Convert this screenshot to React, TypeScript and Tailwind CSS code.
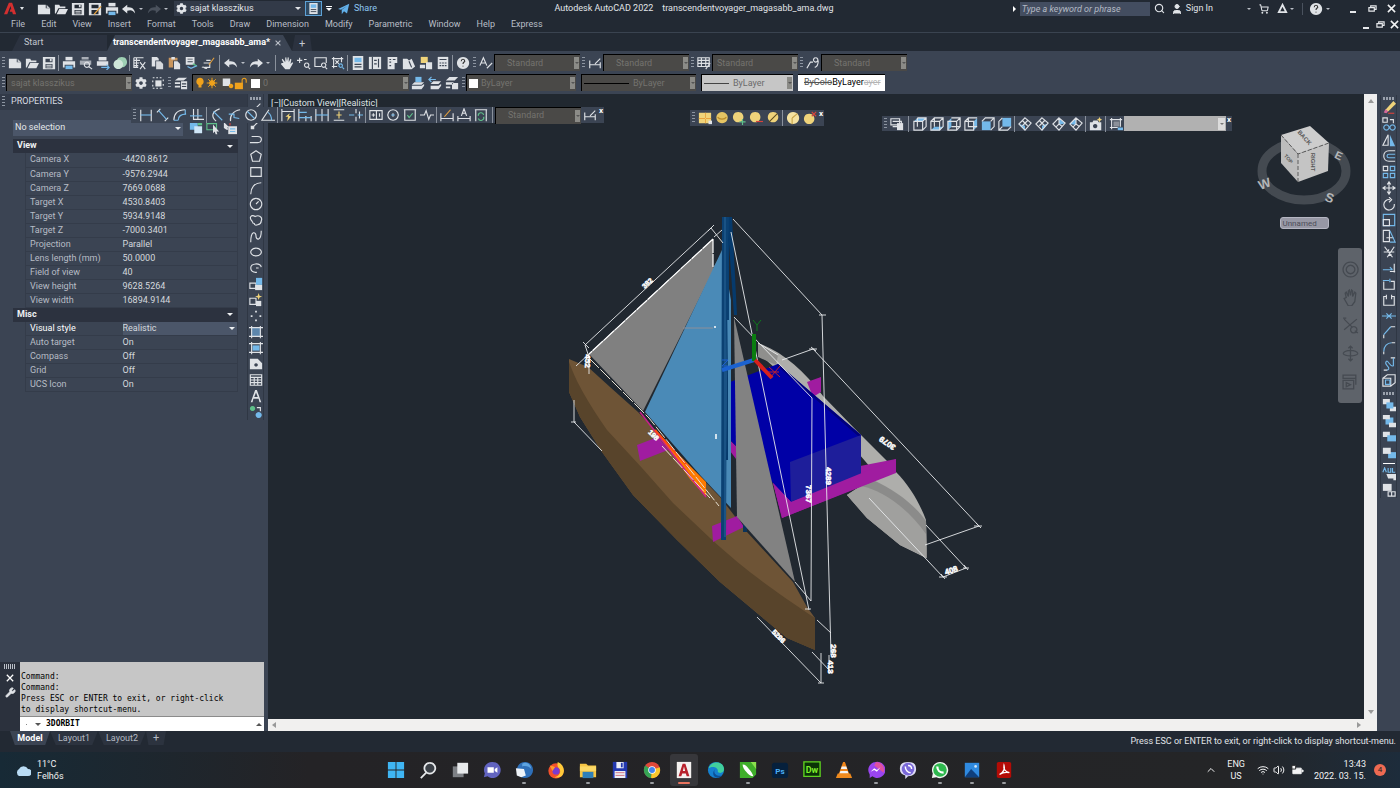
import React from "react";
import {
  Search, User, ShoppingCart, Wrench, Wifi, Volume2, ChevronUp,
} from "lucide-react";
import { FaCog } from "react-icons/fa";

type Part = ["s" | "f", string, string];
const W = "#dfe2e6";
const B = "#74b9ea";
const O = "#e8a23c";
const Y = "#efd37a";
const G = "#5fc08a";
const R = "#d8433c";
const D = "#3b4453";

const ICONS: Record<string, Part[]> = {
  newFile: [["f", W, "M1 3h9v4h5v7H1z"], ["f", "#c4c8ce", "M11 3l4 4h-4z"]],
  open: [["f", W, "M1 3h5l1 2h6v2H5l-3 6H1z"], ["f", W, "M6 8h10l-3 6H3z"]],
  save: [["f", W, "M1 1h14v14H1zM4 3v4h8V3zM4 9v5h8V9z"], ["f", W, "M5 10h6v1H5zM5 12h6v1H5zM9 3h2v3H9z"]],
  saveAs: [["f", W, "M1 1h14v14H1zM4 3v4h8V3zM4 9v5h8V9z"], ["s", O, "M7 14l8-9"]],
  print: [["f", W, "M4 1h8v4H4z"], ["f", W, "M1 6h14v7h-2v-3H3v3H1z"], ["f", B, "M4 11h8v4H4z"]],
  preview: [["f", "#a8adb5", "M3 1h8v3H3zM1 5h13v5H1z"], ["s", W, "M9 7a3 3 0 1 0 .1 0M11 12l4 3"]],
  publish: [["f", W, "M3 1h9v4H3zM1 6h13v5H1z"], ["s", B, "M6 13h9M12 10l3 3-3 3"]],
  globe: [["f", "#9ed0b4", "M10 1a6 6 0 1 0 .1 0z"], ["f", "#cfe6d8", "M6 4a5.500 5.500 0 1 0 .1 0z"]],
  cut: [["s", W, "M1 2h11M1 5h7M1 8h6M1 11h5M1 2v11h5M4 2v11M8 7l6 8M14 7l-6 8"]],
  copy: [["f", W, "M2 1h6l2 2v2H6v7H2z"], ["f", "#d5d8dc", "M7 6h5l3 3v6H7z"]],
  paste: [["f", "#c9955c", "M2 2h10v3H7v8H2z"], ["f", W, "M8 6h4l3 3v6H8zM5 1h4v3H5z"]],
  match: [["f", W, "M2 1h10v9H2zM4 3v1h6V3zM4 6v1h6V6z"], ["s", B, "M4 12l4 2 7-3"], ["s", G, "M10 9l4 2"]],
  brush: [["s", W, "M1 13c3-2 2 2 6 1M3 8h7v5H4M6 5h5"], ["s", O, "M9 10l6-8"]],
  undo: [["f", W, "M0 8l6-5v3c5 0 8 1 9 7-3-4-5-4-9-3v3z"]],
  redo: [["f", W, "M16 8l-6-5v3C5 6 2 7 1 13c3-4 5-4 9-3v3z"]],
  redoDim: [["f", "#4a515c", "M16 8l-6-5v3C5 6 2 7 1 13c3-4 5-4 9-3v3z"]],
  pan: [["f", W, "M4 8L2 4l1-1 3 4V2l1-1 1 5 1-5 1 1v5l2-4 1 1-1 5 2-2 1 1-4 7H6L1 9l1-1z"]],
  zoomRt: [["s", W, "M0 5h6M3 2v6M8 4h3M11 8a2.500 2.500 0 1 0 .1 0M13 13l2 2"]],
  zoomWin: [["s", W, "M8 12H1V2h13v6M11 8a2.500 2.500 0 1 0 .1 0M13 13l2 2"]],
  zoomPrev: [["s", W, "M1 3h13M3 1v13M12 1v6M1 12h6M5 5l4 4M9 5L5 9"], ["s", B, "M11 9a2 2 0 1 0 .1 0M13 13l2 2"]],
  props: [["f", W, "M2 0h12v16H2z"], ["f", B, "M4 2h8v5H4z"], ["s", D, "M4 9.500h8M4 12.500h8"]],
  design: [["f", W, "M1 1h14v14H1z"], ["s", D, "M5 1v14M7 5h3M7 9h3M12 3v10"]],
  palettes: [["f", W, "M3 1h11v7h-3v7H3z"], ["s", D, "M5 4h2M9 4h3M5 7h2M5 11h2"]],
  sheet: [["f", W, "M1 3h5l2 2 3-2 4 9-4 3H1z"], ["s", D, "M8 6l3 7"]],
  markup: [["f", Y, "M2 1h8v7H2z"], ["f", W, "M8 7h7v8H8zM1 10h6v4H1z"]],
  calc: [["f", W, "M2 1h12v14H2z"], ["s", D, "M4 4h8M4 8h2M7 8h2M10 8h2M4 11h2M7 11h2M10 11h2"]],
  help: [["f", W, "M8 1a7 7 0 1 0 .1 0z"], ["s", "#333", "M6 6c0-3 4-3 4 0 0 1-2 1-2 3M8 11v1"]],
  textStyle: [["s", W, "M1 11L5 2l4 9M2.500 8h5"], ["s", W, "M9 14l6-6"]],
  dimStyle: [["s", W, "M2 5v9M14 7v7M2 10h12M8 9l6-6"]],
  tableStyle: [["s", W, "M1 2h13v10H1zM1 5h13M1 8.500h13M5 2v10M10 2v10"], ["s", W, "M10 15l5-7"]],
  leader: [["s", W, "M1 14l4-7h3M11 2a2.500 2.500 0 1 0 .1 0M14 5c0 5-1 7-4 8"]],
  workspace: [["s", W, "M2 2h2M6 2h2M10 2h2M14 4v2M14 9v2M2 14h2M6 14h2M10 14h3M2 5v2M2 10v2"], ["f", W, "M5 5h7v7H5z"]],
  layers: [["f", W, "M5 2h10l-4 3H1zM1 7h6v2H1zM1 11h6v2H1zM8 6h7v9H8z"], ["s", D, "M9 9h5M9 12h5"]],
  layerA: [["f", B, "M5 1h7v6H5z"], ["f", W, "M4 7h11l-3 3H1zM1 11h11l3-2v2l-3 4H1z"]],
  layerB: [["s", B, "M9 4H2M4 1L1 4l3 3"], ["f", W, "M6 6h9l-3 3H3zM3 11h9l3-2v2l-3 4H3z"]],
  layerC: [["f", W, "M5 1h10l-4 4H1zM1 7h9l-2 3H1zM8 8h7v7H8zM1 12h5v2H1z"]],
  bulb: [["f", "#f0a21c", "M8 1a5 5 0 0 0-2 9.500V14h4v-3.500A5 5 0 0 0 8 1z"]],
  sun: [["f", "#f0a21c", "M8 4a4 4 0 1 0 .1 0z"], ["s", "#f0a21c", "M8 1v14M1 8h14M3 3l10 10M13 3L3 13"]],
  vpFreeze: [["f", W, "M1 2h10v10H1z"], ["f", "#f0a21c", "M12 9a3 3 0 1 0 .1 0z"]],
  lock: [["f", "#f0a21c", "M1 7h10v8H1z"], ["s", "#f0a21c", "M10 8V4a2 2 0 0 1 5 0v3"]],
  dLinear: [["s", W, "M2 2v13M14 2v13"], ["s", B, "M2 8h12"]],
  dAligned: [["s", W, "M1 5l4-4M10 15l4-4"], ["s", B, "M3 3l9 10"]],
  dArc: [["s", W, "M1 14C1 7 5 2 14 2"], ["s", B, "M6 14c0-5 3-7 9-7M1 14h5M14 2v5"]],
  dOrd: [["s", W, "M4 1v12h12M9 1v12"], ["s", B, "M0 9h14"]],
  dRadius: [["s", W, "M7 15C1 10 2 4 11 1"], ["s", B, "M4 4l10 10"]],
  dJog: [["s", W, "M4 15C3 9 7 3 15 2"], ["s", B, "M2 7l6 0 0 4 6 1"]],
  dDia: [["s", W, "M8 2a6 6 0 1 0 .1 0"], ["s", B, "M4 4l8 8"]],
  dAng: [["s", W, "M9 2L1 14h15"], ["s", B, "M8 5c3 2 4 4 4 9"]],
  dQuick: [["s", W, "M1 1v14M15 1v14M1 4h14"], ["f", Y, "M10 6L5 10h3l-1 5 5-6H9z"]],
  dBase: [["s", W, "M1 1v14M9 9v6M15 9v6"], ["s", B, "M1 5h9M1 11h14"]],
  dCont: [["s", W, "M1 1v14M8 1v14M15 1v14"], ["s", B, "M1 8h14"]],
  dSpace: [["s", W, "M2 2h12M2 14h12"], ["s", Y, "M8 4v8M5 8h6"]],
  dBreak: [["s", W, "M8 1v5M8 10v5M12 4v8"], ["s", B, "M0 8h6M10 8h6"]],
  dTol: [["s", W, "M1 3h14v10H1zM8.500 3v10M3 8h4M5 6v4M12 6v4"]],
  dCenter: [["s", W, "M8 2a6 6 0 1 0 .1 0M8 6v4"], ["s", B, "M6 8h4"]],
  dInspect: [["s", W, "M1 2h14M2 2v12h12V2"], ["s", G, "M5 8l2 3 4-5"]],
  dJogLine: [["s", W, "M0 8h5l2-5 3 10 2-5h4"]],
  dEdit: [["s", W, "M1 6v9M15 6v9M1 12h14"], ["s", O, "M5 10l7-8"]],
  dTextEdit: [["s", W, "M1 9v6M15 9v6M1 12h14M5 9l3-8 3 8M6 6h4"]],
  dUpdate: [["s", W, "M1 2h14M2 2v13M14 2v13"], ["s", G, "M5 9a3 3 0 0 1 6-1M11 10a3 3 0 0 1-6 2"]],
  group1: [["f", Y, "M1 2h14v12H1z"], ["f", O, "M1 8h14v1H1zM8 2h1v12H8z"], ["f", W, "M12 11h4v4h-4z"]],
  group2: [["f", "#e5c463", "M8 1a6.500 6.500 0 1 0 .1 0z"], ["s", "#b98b2b", "M3 7c2 3 8 3 10 0"]],
  group3: [["f", Y, "M7 1a6 6 0 1 0 .1 0z"], ["s", G, "M12 9v7M8.500 12.500h7"]],
  group4: [["f", Y, "M7 1a6 6 0 1 0 .1 0z"], ["s", R, "M8 12h8"]],
  group5: [["f", Y, "M8 1a6 6 0 1 0 .1 0z"], ["s", "#5c4a1e", "M3 13L13 3"]],
  group6: [["f", "#f5e2a0", "M8 1a7 7 0 1 0 .1 0z"], ["s", "#c9a548", "M7 8v7M7 8l6-5"]],
  group7: [["f", Y, "M7 3a6 6 0 1 0 .1 0z"], ["s", R, "M10 1l5 5M15 1l-5 5"]],
  named: [["s", W, "M1 2h10v7H1zM3 5h10v6H3"], ["f", W, "M8 7h7v8H8z"]],
  vTop: [["f", B, "M5 1h10l-4 4H1z"], ["s", W, "M1 5h10v10H1zM5 1h10v10l-4 4M11 5l4-4M5 1v10"]],
  vBottom: [["f", B, "M5 11h10l-4 4H1z"], ["s", W, "M1 5h10v10H1zM1 5l4-4h10v10l-4 4M5 1v10M11 5l4-4"]],
  vLeft: [["f", B, "M1 5l4-4v10l-4 4z"], ["s", W, "M1 5h10v10H1zM5 1h10v10l-4 4M5 11h10M11 5l4-4"]],
  vRight: [["f", B, "M11 5l4-4v10l-4 4z"], ["s", W, "M1 5h10v10H1zM1 5l4-4h10M5 1v10h10"]],
  vFront: [["f", B, "M1 5h10v10H1z"], ["s", W, "M1 5l4-4h10v10l-4 4M11 5l4-4"]],
  vBack: [["f", B, "M5 1h10v10H5z"], ["s", W, "M5 1L1 5v10h10l4-4M1 15l4-4"]],
  isoSW: [["f", B, "M1 8l7 2v5z"], ["s", W, "M8 1l7 6-7 8-7-7zM5 4l6 6M11 4L5 10"]],
  isoSE: [["f", B, "M15 7l-7 3v5z"], ["s", W, "M8 1l7 6-7 8-7-7zM5 4l6 6M11 4L5 10"]],
  isoNE: [["f", B, "M8 1l7 6-7 2z"], ["s", W, "M8 1l7 6-7 8-7-7zM5 11l3-3 4 3M8 1v8"]],
  isoNW: [["f", B, "M8 1L1 8l7 1z"], ["s", W, "M8 1l7 6-7 8-7-7zM5 11l3-3 4 3M8 1v8"]],
  camera: [["f", W, "M1 6h3l1-2h5l1 2h3v9H1z"], ["f", D, "M7 8a2.500 2.500 0 1 0 .1 0z"], ["f", Y, "M12 0l1 2 2 1-2 1-1 2-1-2-2-1 2-1z"]],
  viewMgr: [["s", W, "M1 3h14M3 1v13M13 1v10M1 12h9"], ["f", "#8b9099", "M5 5h7v6H5z"], ["f", B, "M10 12h6v3h-6z"]],
  line: [["s", W, "M3 13L13 3"]],
  ray: [["s", W, "M5 11l7-7"], ["f", W, "M2 10h4v4H2z"]],
  pline: [["s", W, "M3 4h7c6 0 5 7 0 7H1"]],
  polygon: [["s", W, "M8 2l6 4-2 8H4L2 6z"]],
  rect: [["s", W, "M2 3h12v10H2z"]],
  arc: [["s", W, "M2 15C2 8 6 2 14 2"]],
  circle: [["s", W, "M8 1.500a6.500 6.500 0 1 0 .1 0M8 8l3-3"]],
  cloud: [["s", W, "M4 10C-1 5 3 1 7 4c4-2 9 0 7 5 0 4-8 7-8 3-1 0-2-1-2-2"]],
  spline: [["s", W, "M2 15C2 1 8 3 8 8s6 6 6-6"]],
  ellipse: [["s", W, "M8 3.500a6 4.500 0 1 0 .1 0"]],
  ellArc: [["s", W, "M14 7c-1-5-12-5-12 1 0 4 4 5 7 5M8 8h3"]],
  insert: [["s", W, "M1 7h7v6H1z"], ["f", B, "M8 1h7v8H8z"], ["f", W, "M7 9h8v6H7z"]],
  block: [["s", W, "M1 6h7v7H1z"], ["f", Y, "M11 0l1 3 3 1-3 1-1 3-1-3-3-1 3-1z"], ["f", W, "M8 9h6v6H8z"]],
  point: [["f", W, "M7 2h2v2H7zM7 12h2v2H7zM2 7h2v2H2zM12 7h2v2h-2z"]],
  hatch: [["f", "#5d86ac", "M3 3h10v10H3z"], ["s", W, "M0 3h16M0 13h16M3 1v14M13 1v14"]],
  gradient: [["f", B, "M4 5h8v6H4z"], ["s", W, "M0 3h16M0 13h16M3 1v14M13 1v14"]],
  region: [["f", W, "M1 2h9l5 5v7H1zM8 7a2 2 0 1 0 .1 0z"]],
  table: [["s", W, "M1.500 2h13v12h-13zM1 5h14M1 8h14M1 11h14M6 5v9M10 5v9"]],
  mtext: [["f", W, "M2 15L7 1h2l5 14h-2l-1-4H5l-1 4zM6 9h4L8 4z"]],
  addSel: [["f", G, "M4 1a3 3 0 1 0 .1 0z"], ["f", B, "M11 8a3.500 3.500 0 1 0 .1 0z"], ["s", W, "M9 3h4v4"]],
  erase: [["f", Y, "M13 0l3 3-9 9-3-2z"], ["f", "#d3689a", "M4 9l3 3-2 2-3-1z"], ["s", R, "M7 14h7"]],
  copyObj: [["s", W, "M1 1h5v5H1zM9 3h4v4"], ["s", B, "M5 9a3 3 0 1 0 .1 0M12 9a3 3 0 1 0 .1 0"]],
  mirror: [["s", W, "M7 2L1 14h6z"], ["f", B, "M9 2l6 13H9z"]],
  offset: [["s", W, "M15 2H8c-8 0-8 12 0 12h7"], ["s", B, "M15 6H8c-3 0-3 4 0 4h7"]],
  array: [["s", W, "M1.500 1.500h5v5h-5z"], ["s", B, "M9.500 1.500h5v5h-5zM1.500 9.500h5v5h-5zM9.500 9.500h5v5h-5z"]],
  move: [["s", W, "M8 1v14M1 8h14M6 4l2-3 2 3M6 12l2 3 2-3M4 6L1 8l3 2M12 6l3 2-3 2"]],
  rotate: [["s", W, "M9 3a6 6 0 1 0 5 5M8 0l3 3-3 3"]],
  scale: [["s", B, "M1.500 1.500h13v13h-13z"], ["s", W, "M1.500 7.500h7v7h-7z"]],
  stretch: [["s", W, "M1.500 1.500h7v13h-7zM5 10h8"], ["s", B, "M9 2l6 13H9"]],
  trim: [["s", W, "M3 2l9 12M14 2L6 14M2 8h12M8 5l-2 3M8 12l3-1"]],
  extend: [["s", W, "M14 3v10M9 12h6"], ["s", B, "M1 10h11M9 7l3 3"]],
  breakPt: [["s", W, "M2 5v9h12V5h-4"], ["s", B, "M1 4h7M9 2v4"]],
  breakObj: [["s", W, "M5 4H2v10h12V4h-3M5 2v5M11 2v5"]],
  join: [["s", B, "M0 8h16M5 5l3 3-3 3M11 5L8 8l3 3"]],
  chamfer: [["s", W, "M2 15v-4M10 2h5"], ["s", B, "M2 11l8-9"]],
  fillet: [["s", W, "M2 15v-3M11 2h4"], ["s", B, "M2 12c0-6 4-10 9-10"]],
  blend: [["s", W, "M2 15h4M10 1h5"], ["s", B, "M6 15c6-3-5-6-1-10 2-2 4 7 8 5V1"]],
  explode: [["s", W, "M1 6h9v9H1zM1 6l5-4h9v9l-5 4"], ["s", B, "M4 8h5v5H4z"]],
  front: [["f", W, "M1 1h8v6H1zM9 10h7v5H9z"], ["f", B, "M5 5h8v7H5z"]],
  back: [["f", B, "M4 4h9v8H4z"], ["f", W, "M1 1h8v5H1zM8 10h8v5H8z"]],
  above: [["f", W, "M1 2h8v6H1z"], ["f", B, "M6 6h10v7H6z"]],
  under: [["f", B, "M7 7h9v7H7z"], ["f", W, "M1 2h9v7H1z"]],
  textFront: [["s", B, "M1 6l2-5 2 5M7 1v5h3V1M12 1v5h3"], ["f", W, "M5 8h11v7h-3v-2H7z"]],
  hatchBack: [["f", W, "M1 1h10v8H1z"], ["s", W, "M7 10h8v5H7zM11 10v5"]],
  pickAdd: [["f", B, "M1 2h9v8H1z"], ["f", "#cfe6f7", "M6 6h9v8H6z"], ["f", G, "M10 1h5v4h-5z"]],
  selectObj: [["s", G, "M1 3h11v7H1z"], ["f", W, "M8 4l7 8-3 0 1 3-2 0-1-3-2 2z"]],
  quickSel: [["f", W, "M1 1l6 6-2 0 1 3-2 0-3-2z"], ["f", W, "M6 6h10v9H6z"], ["s", R, "M8 1v4"], ["s", B, "M8 9h6M8 12h6"]],
};

function Icon({ n, size = 14 }: { n: string; size?: number }) {
  return (
    <svg viewBox="0 0 16 16" width={size} height={size} aria-hidden="true" className="shrink-0">
      {ICONS[n].map(([k, c, d], i) =>
        k === "f" ? (
          <path key={i} d={d} fill={c} fillRule="evenodd" />
        ) : (
          <path key={i} d={d} fill="none" stroke={c} strokeWidth="1.3" />
        ),
      )}
    </svg>
  );
}

function Tool({ n }: { n: string }) {
  return (
    <button aria-label={n} className="flex h-4 w-[17px] shrink-0 items-center justify-center">
      <Icon n={n} />
    </button>
  );
}

function Drop() {
  return (
    <button aria-label="More" className="flex h-4 w-2 shrink-0 items-center justify-center">
      <span className="size-0 border-x-2 border-t-2 border-x-transparent border-t-[#b9bec6]" />
    </button>
  );
}

function Tools({ list }: { list: string }) {
  return (
    <>
      {list.split(" ").map((n, i) => {
        if (n === "|") return <span key={i} className="mx-px h-4 w-px shrink-0 bg-[#8a919c]" />;
        if (n === "||") return <span key={i} className="mx-[2px] h-4 w-[2px] shrink-0 border-r border-[#8a919c]" />;
        if (n === "v") return <Drop key={i} />;
        return <Tool key={i} n={n} />;
      })}
    </>
  );
}

function Grip() {
  return (
    <span className="flex h-4 w-[6px] shrink-0 items-center justify-center">
      <span className="h-3 w-[3px] bg-[repeating-linear-gradient(to_bottom,#8d95a1_0_1px,transparent_1px_3px)]" />
    </span>
  );
}

function GripRow() {
  return (
    <span className="mt-[2px] h-[3px] w-3 bg-[repeating-linear-gradient(to_right,#9aa1ac_0_2px,transparent_2px_3px)]" />
  );
}

function Combo({
  label, value, box, text = "text-[#74736f]", children,
}: {
  label: string; value: string; box: string; text?: string; children?: React.ReactNode;
}) {
  return (
    <div className={`flex h-[17px] shrink-0 items-center border-t border-l border-black ${box}`}>
      {children}
      <select aria-label={label} className={`h-full min-w-0 flex-1 appearance-none bg-transparent text-[9px] leading-none outline-none ${text}`}>
        <option>{value}</option>
      </select>
      <span className="mx-px flex h-3 w-[5px] items-center justify-center bg-[#8b8b87]">
        <span className="size-0 border-x-2 border-t-2 border-x-transparent border-t-[#555]" />
      </span>
    </div>
  );
}

function WindowButtons({ small = false }: { small?: boolean }) {
  return (
    <div className={small ? "flex items-center gap-[5px]" : "flex items-center gap-[10px]"}>
      <button aria-label="Minimize" className="flex h-2 w-2 items-end">
        <span className="h-[2px] w-[6px] bg-[#e6e8eb]" />
      </button>
      <button aria-label="Restore">
        <svg viewBox="0 0 10 10" width="9" height="9"><path d="M1 4h6v4H1zM3 4V2h6v4H7" fill="none" stroke="#e6e8eb" strokeWidth="1.3" /></svg>
      </button>
      <button aria-label="Close">
        <svg viewBox="0 0 10 10" width="9" height="9"><path d="M1 1l8 8M9 1L1 9" stroke="#f2f3f4" strokeWidth="1.700" /></svg>
      </button>
    </div>
  );
}

function TitleBar() {
  return (
    <header className="flex h-[17px] items-center text-[9px] text-[#e1e4e8]">
      <div className="flex flex-1 items-center">
        <button aria-label="Application menu" className="flex w-[30px] items-center gap-[3px] pl-1">
          <svg viewBox="0 0 16 16" width="13" height="13"><path d="M0 15L6 1h4l5 14h-4l-1-3H7l1-3h1L8 5 4 15z" fill="#d32f2f" /></svg>
          <span className="size-0 border-x-2 border-t-[3px] border-x-transparent border-t-[#e1e4e8]" />
        </button>
        <div className="flex pr-1 pl-[5px]">
          <Tools list="newFile open save saveAs print undo v redoDim v" />
        </div>
        <div className="flex h-[15px] w-[131px] items-center bg-[#323a48] pl-[2px]">
          <FaCog size={11} color="#e1e4e8" />
          <select aria-label="Workspace" className="min-w-0 flex-1 appearance-none bg-transparent pl-[3px] outline-none">
            <option>sajat klasszikus</option>
          </select>
          <span className="mr-1 size-0 border-x-[3px] border-t-[3px] border-x-transparent border-t-[#e1e4e8]" />
        </div>
        <button aria-label="Save to web and mobile" className="flex h-[15px] w-[17px] items-center justify-center border border-[#5ea2d6] bg-[#2f4a63]">
          <Icon n="props" size={11} />
        </button>
        <button aria-label="Customize" className="ml-1 flex w-[6px] flex-col items-center gap-px">
          <span className="h-px w-full bg-white" />
          <span className="size-0 border-x-[3px] border-t-[3px] border-x-transparent border-t-white" />
        </button>
        <button className="ml-[6px] flex items-center gap-1 text-[#8ec8f2]">
          <svg viewBox="0 0 16 16" width="12" height="12"><path d="M0 8L15 1l-3 13-4-3-3 4V9l7-5-8 5z" fill="#62b0ea" /></svg>
          Share
        </button>
      </div>
      <h1 className="pr-2 whitespace-pre">Autodesk AutoCAD 2022    transcendentvoyager_magasabb_ama.dwg</h1>
      <div className="flex flex-1 items-center justify-end pr-1">
        <span className="mr-1 size-0 border-y-[3px] border-l-[3px] border-y-transparent border-l-white" />
        <input aria-label="Search" placeholder="Type a keyword or phrase" className="h-[14px] w-[130px] bg-[#434d60] pl-[2px] text-[9px] italic outline-none placeholder:text-[#b4bac4]" />
        <button aria-label="Find" className="ml-1"><Search size={11} strokeWidth={2.5} /></button>
        <button className="ml-[6px] flex items-center gap-[3px]"><User size={12} fill="#e1e4e8" />Sign In</button>
        <span className="w-8" />
        <Drop />
        <button aria-label="Store" className="ml-[6px]"><ShoppingCart size={10} strokeWidth={2.5} /></button>
        <button aria-label="Autodesk apps" className="ml-2">
          <svg viewBox="0 0 12 12" width="11" height="11"><path d="M6 2L2 10h8z" fill="none" stroke="#e1e4e8" strokeWidth="2" /></svg>
        </button>
        <Drop />
        <span className="mx-[6px] h-3 w-px bg-[#4a525e]" />
        <button aria-label="Help" className="mr-px"><Icon n="help" /></button>
        <Drop />
        <span className="w-[18px]" />
        <WindowButtons />
      </div>
    </header>
  );
}

const MENUS = ["File", "Edit", "View", "Insert", "Format", "Tools", "Draw", "Dimension", "Modify", "Parametric", "Window", "Help", "Express"];

function MenuBar() {
  return (
    <nav className="flex h-4 items-center border-b border-[#3a4350] pr-px pl-[11px] text-[9px] text-[#b9bec6]">
      <div className="flex flex-1 gap-4">
        {MENUS.map((m) => <button key={m}>{m}</button>)}
      </div>
      <WindowButtons small />
    </nav>
  );
}

function FileTabs() {
  return (
    <div className="flex h-[18px] items-end pl-3 text-[9px]">
      <button className="h-4 w-[95px] bg-[#2b323f] pl-3 text-left text-[#c3c8cf] [clip-path:polygon(8px_0,100%_0,100%_100%,0_100%)]">Start</button>
      <div className="flex h-4 w-[185px] items-center justify-between bg-[#3b4453] pr-[10px] pl-[6px] font-bold text-white [clip-path:polygon(8px_0,176px_0,100%_100%,0_100%)]">
        <button className="whitespace-nowrap">transcendentvoyager_magasabb_ama*</button>
        <button aria-label="Close tab">
          <svg viewBox="0 0 10 10" width="8" height="8"><path d="M2 2l6 6M8 2L2 8" stroke="#b9bec6" strokeWidth="1.4" /></svg>
        </button>
      </div>
      <button aria-label="New tab" className="h-4 w-5 bg-[#2b323f] text-[11px] leading-none text-[#c3c8cf] [clip-path:polygon(3px_0,90%_0,100%_100%,0_100%)]">+</button>
    </div>
  );
}

function Toolbars() {
  const dark = "bg-[#4a4947]";
  return (
    <div className="flex h-[43px] flex-col gap-[3px] bg-[#3b4453] py-[3px]">
      <div className="flex items-center">
        <Grip />
        <Tools list="newFile open save | print preview publish globe | cut copy paste match brush || undo v redo v || pan zoomRt zoomWin zoomPrev | props design palettes sheet markup calc | help" />
        <Grip />
        <Tool n="textStyle" />
        <Combo label="Text style" value="Standard" box={`w-[86px] pl-3 ${dark}`} />
        <Grip />
        <Tool n="dimStyle" />
        <Combo label="Dimension style" value="Standard" box={`w-[86px] pl-3 ${dark}`} />
        <Grip />
        <Tool n="tableStyle" />
        <Combo label="Table style" value="Standard" box={`w-[86px] pl-1 ${dark}`} />
        <Grip />
        <Tool n="leader" />
        <Combo label="Multileader style" value="Standard" box={`w-[86px] pl-3 ${dark}`} />
      </div>
      <div className="flex items-center">
        <Grip />
        <Combo label="Workspaces" value="sajat klasszikus" box={`w-[126px] pl-1 ${dark}`} />
        <button aria-label="Workspace settings" className="flex w-[17px] justify-center"><FaCog size={12} color={W} /></button>
        <Tools list="workspace" />
        <Grip />
        <Tools list="layers" />
        <div className="ml-[3px] flex">
          <Combo label="Layer" value="0" box={`w-[217px] pl-px ${dark}`}>
            <Icon n="bulb" size={12} />
            <Icon n="sun" size={12} />
            <span className="w-1" />
            <Icon n="vpFreeze" size={12} />
            <Icon n="lock" size={13} />
            <span className="mr-[3px] ml-1 size-[9px] bg-white" />
          </Combo>
        </div>
        <Tools list="layerA layerB layerC" />
        <Grip />
        <div className="flex gap-[5px]">
          <Combo label="Color" value="ByLayer" box={`w-[110px] pl-[2px] ${dark}`}>
            <span className="mr-[3px] size-[9px] bg-white" />
          </Combo>
          <Combo label="Linetype" value="ByLayer" box={`w-[115px] pl-[2px] ${dark}`}>
            <span className="mr-1 h-px w-[45px] bg-black" />
          </Combo>
          <Combo label="Lineweight" value="ByLayer" text="text-[#6b6b6b]" box="w-[92px] bg-[#c6c6c6] pl-[2px]">
            <span className="mr-1 h-px w-[25px] bg-[#444]" />
          </Combo>
          <div className="flex h-[17px] w-[87px] items-center border-t border-black bg-white pl-[6px] text-[9px] text-[#555]">
            <span className="line-through">ByColo</span>
            <span className="text-black">ByLayer</span>
            <span className="text-[#b5b5b5] line-through">ayer</span>
          </div>
        </div>
      </div>
    </div>
  );
}

const VIEW_ROWS = [
  ["Camera X", "-4420.8612"], ["Camera Y", "-9576.2944"], ["Camera Z", "7669.0688"],
  ["Target X", "4530.8403"], ["Target Y", "5934.9148"], ["Target Z", "-7000.3401"],
  ["Projection", "Parallel"], ["Lens length (mm)", "50.0000"], ["Field of view", "40"],
  ["View height", "9628.5264"], ["View width", "16894.9144"],
];
const MISC_ROWS = [["Visual style", "Realistic"], ["Auto target", "On"], ["Compass", "Off"], ["Grid", "Off"], ["UCS Icon", "On"]];

function Section({ title, rows }: { title: string; rows: string[][] }) {
  return (
    <section>
      <h3 className="flex h-[14px] items-center justify-between bg-[#2c323f] pr-[5px] pl-1 font-bold text-[#eef0f2]">
        {title}
        <span className="size-0 border-x-[3px] border-t-[3px] border-x-transparent border-t-[#eef0f2]" />
      </h3>
      <div className="pl-3">
        <table className="w-full table-fixed border-x border-[#343c4a]">
          <tbody>
            {rows.map(([k, v]) => (
              <tr key={k} className="h-[14px] border-b border-[#343c4a] leading-[13px]">
                <th scope="row" className={`w-[97px] p-0 pl-1 text-left font-normal ${v === "Realistic" ? "text-white" : "text-[#b7bcc5]"}`}>{k}</th>
                <td className="p-0 text-[#d4d8dd]">
                  {v === "Realistic" ? (
                    <div className="flex items-center bg-[#4b5669]">
                      <select aria-label={k} className="h-[13px] flex-1 appearance-none bg-transparent outline-none"><option>{v}</option></select>
                      <span className="mr-[2px] size-0 border-x-[3px] border-t-[3px] border-x-transparent border-t-[#eef0f2]" />
                    </div>
                  ) : v}
                </td>
              </tr>
            ))}
          </tbody>
        </table>
      </div>
    </section>
  );
}

function Properties() {
  return (
    <aside className="w-[247px] text-[9px]">
      <h2 className="flex h-4 items-center bg-[#323a48] text-[#d8dbe0]"><Grip /><span className="pl-[5px]">PROPERTIES</span></h2>
      <div className="mt-[10px] mr-[9px] ml-[13px]">
        <div className="mb-[3px] flex h-4 items-center">
          <div className="mr-1 flex h-4 w-[171px] items-center bg-[#4b5669] pl-[2px] text-[#e4e7ea]">
            <select aria-label="Selection" className="flex-1 appearance-none bg-transparent outline-none"><option>No selection</option></select>
            <span className="mr-[2px] size-0 border-x-[3px] border-t-[3px] border-x-transparent border-t-[#eef0f2]" />
          </div>
          <Tools list="pickAdd selectObj quickSel" />
        </div>
        <Section title="View" rows={VIEW_ROWS} />
        <Section title="Misc" rows={MISC_ROWS} />
      </div>
    </aside>
  );
}

function CommandWindow() {
  return (
    <section className="mr-1 flex h-[69px] bg-[#2b313d]">
      <div className="flex w-5 flex-col items-center gap-[5px] pt-[2px] text-[#e1e4e8]">
        <span className="h-[5px] w-3 bg-[repeating-linear-gradient(to_right,#b9bec6_0_1px,transparent_1px_2px)]" />
        <button aria-label="Close command line">
          <svg viewBox="0 0 10 10" width="8" height="8"><path d="M1 1l8 8M9 1L1 9" stroke="#fff" strokeWidth="1.600" /></svg>
        </button>
        <button aria-label="Customize command line"><Wrench size={11} fill="#e1e4e8" /></button>
      </div>
      <div className="flex flex-1 flex-col bg-[#c6c6c6] font-['DejaVu_Sans_Mono',monospace] text-black">
        <div className="flex-1 pt-[9px] pl-px text-[8px] leading-[11px]">
          <p>Command:</p><p>Command:</p>
          <p>Press ESC or ENTER to exit, or right-click</p>
          <p>to display shortcut-menu.</p>
        </div>
        <div className="flex h-[15px] items-center border-t border-[#8b8b8b] bg-white pr-[2px] pl-[6px]">
          <span className="mr-2 size-px bg-[#888]" />
          <span className="size-0 border-x-[3px] border-t-[3px] border-x-transparent border-t-[#555]" />
          <input aria-label="Command" defaultValue="3DORBIT" className="ml-[5px] min-w-0 flex-1 text-[8px] font-bold outline-none" />
          <span className="size-0 border-x-[3px] border-b-[3px] border-x-transparent border-b-[#555]" />
        </div>
      </div>
    </section>
  );
}

const DIMS = [
  "M711 228L585 345M713 239L589 354M708 231l6-6M583 342l6 6M711 228l12 15M722 230l-8 7M585 345l4 12M589 354v20M589 354l-13 12",
  "M574 400v22l28 29M571 422h5",
  "M731 232L809 610M733 219l89 96 9 340M819 315h7",
  "M734 317l78 81-1 203M758 343l20 12",
  "M782 360l31-11L979 526l-54 19M809 349h8M974 526h8M811 347l5 4M976 523l5 5",
  "M869 498l74 79 23-9-40-43M939 577h8M963 568h6M941 574l4 5M964 565l4 5",
  "M757 617l64 66v-30M818 683h6",
  "M817 620l14 13M795 582l16 19M812 652l19 20M805 609h6M829 655v18",
];

function Model() {
  return (
    <svg viewBox="268 94 1096 625" className="absolute inset-0 size-full" role="img" aria-label="Outrigger sailboat model">
      <path d="M758 343c25 9 45 27 65 53l34 35 33 33 6 8c14 14 24 32 30 48l1 38-27-13-33-27-20-23 30-20-60-70-59-52z" fill="#aeaeab" />
      <path d="M847 495l26-15c22 10 42 25 53 41l1 37-27-13-33-27z" fill="#8b8b8a" />
      <path d="M847 495l14-9c20 4 45 20 65 48v24l-26-13-33-27z" fill="#a0a09e" />
      <path d="M758 343l20 12-2 10-18-8z" fill="#8f8f8d" />
      <path d="M807 382l14-5v15l-8 5zM730 440l6 6v13l-6-8zM773 483l123-24v14L782 518z" fill="#a01ca0" />
      <path d="M730 382l48-18 83 71v40l-70 27-18-19-43-43z" fill="#0000a6" />
      <path d="M790 462l71-27v40l-70 27z" fill="#1e1e9a" />
      <path d="M778 364l83 71-3 1-82-71z" fill="#00007c" />
      <path d="M773 483l18 19 105-43v13L782 518z" fill="#a01ca0" />
      <path d="M569 359l19 8 22 20 28 25 82 85 27 35 46 50 14 25 8 11v32l-28-12-30-25-37-31-43-42-44-45-31-43-22-35-11-25z" fill="#6e5436" />
      <path d="M569 362c8 22 19 40 38 68l35 38 31 35 37 35c35 32 60 50 105 80v32l-28-12-30-25-37-31-43-42-44-45-31-43-22-35-11-25z" fill="#58442b" />
      <path d="M713 239L589 354l54 57 79-158-9 15z" fill="#808080" />
      <path d="M722 250l-77 162 55 63 31 33V300z" fill="#4a8ab7" />
      <path d="M637 445l21-8 10 13-28 11zM712 526l25-10 7 11-31 15z" fill="#a01ca0" />
      <path d="M657 433l49 49v15l-16-18z" fill="#ff7a00" />
      <path d="M640 412l66 85" stroke="#c81e8c" strokeWidth="1.500" />
      <path d="M655 430l34 38" stroke="#ff4a10" strokeWidth="2" />
      <path d="M722 217h7v103h-2l-1 220h-5z" fill="#0b4173" />
      <path d="M729 217h3l5 98h-3l-6-85v230h-2z" fill="#063a6c" />
      <path d="M725 217v320" stroke="#2a6698" strokeWidth="1" />
      <path d="M743 520h4v12h-4z" fill="#0b3359" />
      <path d="M734 317l3 200 58 65z" fill="#828282" />
      <path d="M683 328h30" stroke="#8b8f9a" />
      <path d="M716 434v5M714 327h2" stroke="#fff" strokeWidth="1.500" />
      <path d={DIMS.join("")} fill="none" stroke="#e8eaec" strokeWidth="0.900" />
      <path d="M713 239v28M713 239L589 354" stroke="#fff" strokeWidth="1.200" fill="none" strokeDasharray="14 1" />
      <path d="M589 358l60 60 70 88M662 446l48 52" stroke="#e8e2d4" strokeWidth="1" fill="none" strokeDasharray="14 2" />
      <path d="M722 370l32-10" stroke="#1b62d0" strokeWidth="4" />
      <path d="M754 334v27" stroke="#0a7d10" strokeWidth="4" />
      <path d="M755 360l17 18" stroke="#d8211c" strokeWidth="4" />
      <path d="M769 367l11 10M780 366l-10 12M768 372h11" stroke="#c02030" fill="none" />
      <path d="M753 320l4 5 4-5M757 325v6" stroke="#0f7a1c" fill="none" />
      <path d="M722 360h6l-6 6h6" stroke="#1d5fd0" fill="none" />
      <g fill="#fff" stroke="#fff" strokeWidth="0.500" fontSize="8" fontWeight="bold" fontFamily="Liberation Sans, sans-serif" textAnchor="middle">
        <text transform="translate(889 441) rotate(215)">3079</text>
        <text transform="translate(952 573) rotate(-18)">408</text>
        <text transform="translate(649 285) rotate(-43)" fontSize="7">382</text>
        <text transform="translate(585 361) rotate(90)">452</text>
        <text transform="translate(652 437) rotate(45)" fontSize="7">198</text>
        <text transform="translate(806 494) rotate(90)">7367</text>
        <text transform="translate(826 476) rotate(90)">4289</text>
        <text transform="translate(777 638) rotate(45)" fontSize="7">5296</text>
        <text transform="translate(831 651) rotate(90)">268</text>
        <text transform="translate(828 667) rotate(90)">413</text>
      </g>
    </svg>
  );
}

function ViewCube() {
  return (
    <div className="absolute top-[30px] right-3 flex w-24 flex-col items-center">
      <svg viewBox="1256 124 96 84" className="w-full" role="img" aria-label="View cube">
        <ellipse cx="1304" cy="171" rx="42" ry="29" fill="none" stroke="#444a51" strokeWidth="9" />
        <path d="M1281 135l29-9 19 17-31 11z" fill="#cdcdcd" />
        <path d="M1281 135l17 19v28l-17-19z" fill="#bdbdbd" />
        <path d="M1298 154l31-11-1 28-30 11z" fill="#c4c4c4" />
        <path d="M1281 135l17 19 31-11M1298 154v28" fill="none" stroke="#444" strokeDasharray="4 2" strokeWidth="0.800" />
        <g fontFamily="Liberation Sans, sans-serif" fontWeight="bold" textAnchor="middle">
          <g fill="#555">
            <text transform="translate(1303 139) rotate(48)" fontSize="6">BACK</text>
            <text transform="translate(1311 162) rotate(90)" fontSize="6">RIGHT</text>
            <text transform="translate(1287 160) rotate(50)" fontSize="5">TOP</text>
          </g>
          <g fill="#b4b6b8" fontSize="13">
            <text transform="translate(1266 188) rotate(-20)">W</text>
            <text transform="translate(1328 202) rotate(20)">S</text>
            <text transform="translate(1337 159) rotate(25)" fontSize="11">E</text>
          </g>
        </g>
      </svg>
      <button className="mt-[9px] h-3 w-[49px] rounded-[3px] border border-[#b5b6c2] bg-[#9798a5] pl-[2px] text-left text-[8px] leading-[9px] text-[#4c4d58]">Unnamed</button>
    </div>
  );
}

function NavBar() {
  const paths = [
    "M8 1a7 7 0 1 0 .1 0M8 4a4 4 0 1 0 .1 0",
    "M4 8L3 4l1-1 2 4V2l1-1 1 5 1-5 1 1v5l2-4 1 1-1 8-3 4H6L2 9z",
    "M2 2l8 8M14 2L2 12M11 9a3 3 0 1 0 .1 0M1 1h3M12 13l3 2",
    "M8 1v14M6 3l2-2 2 2M6 13l2 2 2-2M1 8c2-4 12-4 14 0M1 8c2 3 12 3 14 0",
    "M1 2h12v3H1zM1 7h10v8H1zM4 9l4 2-4 2zM13 2v9",
  ];
  return (
    <div className="absolute top-[154px] right-[2px] flex h-[155px] w-6 flex-col items-center justify-between rounded-[3px] bg-[#5e636a] py-[13px]">
      {paths.map((d, i) => (
        <button key={i} aria-label={`Navigation tool ${i + 1}`}>
          <svg viewBox="0 0 16 16" width="17" height="17"><path d={d} fill="none" stroke="#454a51" strokeWidth="1.200" /></svg>
        </button>
      ))}
    </div>
  );
}

function FloatClose() {
  return <button aria-label="Close toolbar" className="self-start px-px text-[8px] leading-[8px] font-bold text-white">x</button>;
}

function Main() {
  return (
    <main className="relative flex flex-1 bg-[#3b4453]">
      <div className="flex w-[268px] flex-col">
        <div className="flex flex-1 items-start">
          <Properties />
          <div className="flex w-[17px] flex-col items-center border-x border-[#2f3744] pt-px">
            <GripRow />
            <Tools list="line ray pline polygon rect arc circle cloud spline ellipse ellArc insert block point hatch gradient region table mtext addSel" />
          </div>
        </div>
        <CommandWindow />
      </div>
      <div className="flex flex-1 flex-col">
        <div className="flex flex-1">
          <div className="relative flex-1 overflow-hidden bg-[#212830]">
            <p className="pt-1 pl-[3px] text-[9px] leading-[11px] text-[#dfe2e6]">[−][Custom View][Realistic]</p>
            <Model />
            <ViewCube />
            <NavBar />
          </div>
          <div className="flex w-[13px] flex-col items-center justify-between bg-[#efefef] py-[5px]">
            <span className="size-0 border-x-[3px] border-b-4 border-x-transparent border-b-[#999]" />
            <span className="size-0 border-x-[3px] border-t-4 border-x-transparent border-t-[#999]" />
          </div>
        </div>
        <div className="flex h-3 items-center justify-between bg-[#f1f0ef] pr-4 pl-1">
          <span className="size-0 border-y-[3px] border-r-4 border-y-transparent border-r-[#999]" />
          <span className="size-0 border-y-[3px] border-l-4 border-y-transparent border-l-[#999]" />
        </div>
      </div>
      <div className="flex w-[23px] flex-col items-center pt-px">
        <div className="flex w-[17px] flex-col items-center border-x border-[#2f3744]">
          <GripRow />
          <Tools list="erase copyObj mirror offset array move rotate scale stretch trim extend breakPt breakObj join chamfer fillet blend explode" />
          <div className="flex py-[2px]"><GripRow /></div>
          <Tools list="front back above under" />
          <span className="my-[2px] h-px w-3 bg-white" />
          <Tools list="textFront hatchBack" />
        </div>
      </div>

      <div className="absolute top-[13px] left-[131px] flex h-4 items-center bg-[#3b4453]">
        <Grip />
        <Tools list="dLinear dAligned dArc dOrd | dRadius dJog dDia dAng | dQuick dBase dCont dSpace dBreak | dTol dCenter dInspect dJogLine | dEdit dTextEdit dUpdate ||" />
        <Combo label="Dimension style control" value="Standard" box="w-[86px] bg-[#4a4947] pl-3" />
        <Tools list="dimStyle" />
        <FloatClose />
      </div>
      <div className="absolute top-4 left-[690px] flex h-4 items-center bg-[#3b4453]">
        <Grip />
        <Tools list="group1 group2 group3 group4 group5 | group6 group7" />
        <FloatClose />
      </div>
      <div className="absolute top-[22px] left-[882px] flex h-[15px] items-center bg-[#3b4453]">
        <Grip />
        <Tools list="named || vTop vBottom vLeft vRight vFront vBack | isoSW isoSE isoNE isoNW | camera | viewMgr" />
        <div className="flex h-[15px] w-[102px] items-center justify-end bg-[#b1b1b1] pr-px">
          <select aria-label="View" className="min-w-0 flex-1 appearance-none bg-transparent"><option></option></select>
          <span className="flex h-3 w-[7px] items-center justify-center bg-[#dcdcdc]">
            <span className="size-0 border-x-2 border-t-2 border-x-transparent border-t-[#777]" />
          </span>
        </div>
        <FloatClose />
      </div>
    </main>
  );
}

function StatusBar() {
  const clip = "[clip-path:polygon(0_0,100%_0,88%_100%,12%_100%)]";
  return (
    <footer className="flex h-[21px] items-start justify-between pr-1 pl-[10px] text-[9px] text-[#b4bac3]">
      <div className="flex leading-[14px]">
        <button className={`h-[14px] w-10 bg-[#3b4453] font-bold text-white ${clip}`}>Model</button>
        <button className={`h-[14px] w-12 bg-[#2c333f] ${clip}`}>Layout1</button>
        <button className={`h-[14px] w-12 bg-[#2c333f] ${clip}`}>Layout2</button>
        <button aria-label="New layout" className={`h-[14px] w-5 bg-[#2c333f] text-[11px] ${clip}`}>+</button>
      </div>
      <p className="leading-[21px] text-[#e1e4e8]">Press ESC or ENTER to exit, or right-click to display shortcut-menu.</p>
    </footer>
  );
}

const APPS: [string, React.ReactNode, string][] = [
  ["Start", <g fill="#3fb5f3"><path d="M1 1h8.500v8.500H1zM10.500 1H19v8.500h-8.500zM1 10.500h8.500V19H1zM10.500 10.500H19V19h-8.500z" /></g>, ""],
  ["Search", <path d="M12 2a6 6 0 1 0 .1 0M8 13l-6 6" fill="#3c4148" stroke="#e6e8ea" strokeWidth="2" />, ""],
  ["Task view", <g><path d="M2 6h12v12H2z" fill="#7d8085" /><path d="M7 2h12v12H7z" fill="#e8eaec" /></g>, ""],
  ["Chat", <g><path d="M10 1a9 9 0 0 0-8 13l-1 4 4-1A9 9 0 1 0 10 1z" fill="#6264c0" /><path d="M5 7h7v6H5zM13 9l3-2v6l-3-2z" fill="#fff" /></g>, ""],
  ["Thunderbird", <g><path d="M11 1a9 9 0 1 0 .1 0z" fill="#2e6fb8" /><path d="M8 3c5-3 10 1 10 6-2-3-6-4-10-3z" fill="#5ea4e0" /><path d="M1 8l9 1 2 7-5 2-5-2z" fill="#eef3f8" /></g>, "dot"],
  ["Firefox", <g><circle cx="10" cy="11" r="8.500" fill="#f4502a" /><path d="M12 1c6 3 9 9 5 15-2 2-6 3-9 2 5-1 8-5 6-9-2-2-3-4-2-8z" fill="#ffca3a" /><circle cx="10" cy="11" r="4" fill="#7a3bd0" /><path d="M3 5c2 1 4 0 6 2l-3 4z" fill="#ff9a2e" /></g>, ""],
  ["Explorer", <g><path d="M1 3h7l2 2h9v13H1z" fill="#f6c544" /><path d="M1 6h18v5H1z" fill="#fbd866" /><path d="M4 12h12v7H4z" fill="#2f7fb8" /></g>, "dot"],
  ["Total Commander", <g><path d="M2 1h16v18H2z" fill="#2338b0" /><path d="M6 1h8v7H6zM4 11h12v8H4z" fill="#eceff5" /><path d="M11 2h2v5h-2z" fill="#2338b0" /><path d="M5 13h10M5 16h10" stroke="#d06a78" /></g>, ""],
  ["Chrome", <g><circle cx="10" cy="10" r="9" fill="#e0483a" /><path d="M10 10L2.500 5A9 9 0 0 0 9 19z" fill="#35a455" /><path d="M10 10l-1 9A9 9 0 0 0 18.500 7z" fill="#f8c82c" /><circle cx="10" cy="10" r="4.200" fill="#fff" /><circle cx="10" cy="10" r="3.300" fill="#4384ee" /></g>, "dot"],
  ["AutoCAD", <g><path d="M2 1h16v18H2z" fill="#f4f1f0" /><path d="M4 17L8.500 3h3L16 17h-3l-1-3H8l-1 3zM8.700 11h2.600L10 6z" fill="#b8202c" fillRule="evenodd" /></g>, "active"],
  ["Edge", <g><circle cx="10" cy="10" r="9" fill="#1580cf" /><path d="M2 8c2-8 16-9 17 1 0 5-6 5-7 3 1-5-6-7-10-4z" fill="#41cf9c" /><path d="M9 9c-3 4 2 9 8 7-6 6-14 0-8-7z" fill="#0c4f96" /></g>, ""],
  ["CorelDRAW", <g><path d="M1 1h18v14l-4 4H1z" fill="#3fae2a" /><path d="M13 1h6v8z" fill="#8be04e" /><path d="M4 4c3 0 5 2 7 5 2 2 4 5 5 8-3 0-6-2-8-5-2-2-4-5-4-8z" fill="#fff" /></g>, "dot"],
  ["Photoshop", <g><rect x="1" y="2" width="18" height="17" rx="3" fill="#06203c" /><text x="10" y="14" fontSize="9" fill="#4bb0f8" textAnchor="middle" fontWeight="bold">Ps</text></g>, ""],
  ["Dreamweaver", <g><path d="M1 1h18v16H1z" fill="#0a3306" stroke="#5fd420" strokeWidth="1.500" /><text x="10" y="13" fontSize="10" fill="#7ff02c" textAnchor="middle" fontWeight="bold">Dw</text></g>, ""],
  ["VLC", <g><path d="M9 1h2l5 14H4z" fill="#f08519" /><path d="M7.500 6h5l1 3h-7zM6 11h8l1 3H5z" fill="#f2f2f2" /><path d="M3 14h14l2 5H1z" fill="#ef8a1d" /></g>, ""],
  ["Messenger", <g><path d="M10 1a9 9 0 0 0-7 14v4l3-2A9 9 0 1 0 10 1z" fill="#9a45f0" /><path d="M10 1a9 9 0 0 1 8.500 12L8 5z" fill="#f0548c" opacity=".8" /><path d="M4 12l4-4 3 2 4-3-4 5-3-2z" fill="#fff" /></g>, "dot"],
  ["Viber", <g><path d="M10 1c7 0 9 3 9 8s-3 8-9 8l-3 3v-4c-4-1-6-3-6-7 0-5 2-8 9-8z" fill="#dedcf6" /><circle cx="10" cy="9" r="7" fill="#7a68d8" /><path d="M7 6c0 4 3 7 6 7M10 5c3 0 4 2 4 4" stroke="#fff" strokeWidth="1.600" fill="none" /></g>, ""],
  ["WhatsApp", <g><path d="M10 1a9 9 0 0 0-8 13l-1 5 5-1A9 9 0 1 0 10 1z" fill="#eef5ef" /><circle cx="10" cy="10" r="7.500" fill="#2eb84e" /><path d="M7 6c0 4 3 7 7 7" stroke="#fff" strokeWidth="2.500" fill="none" /></g>, "dot"],
  ["Photos", <g><path d="M2 2h16v16H2z" fill="#2f8ae0" /><path d="M2 18l7-9 9 9z" fill="#0f3f7c" /><circle cx="14" cy="6" r="1.500" fill="#cfe6fb" /></g>, "dot"],
  ["Acrobat", <g><rect x="2" y="1" width="16" height="18" rx="2" fill="#b30c06" /><path d="M5 15c5-3 6-7 5-10-1 5 2 7 6 8-4-1-8 0-11 2z" fill="none" stroke="#fff" strokeWidth="1.500" /></g>, "dot"],
];

function Taskbar() {
  return (
    <div className="grid h-9 grid-cols-[1fr_auto_1fr] items-center bg-[linear-gradient(90deg,#172a36,#242326_22%,#242527_88%,#1d2c3b)] text-[9px] text-[#f2f3f4]">
      <button className="flex items-center gap-[6px] pl-[15px] text-left leading-[12px]">
        <svg viewBox="0 0 16 14" width="16" height="14"><path d="M4 13a4 4 0 0 1 0-7 5 5 0 0 1 9 0 3.500 3.500 0 0 1 0 7z" fill="#b9dcf5" /></svg>
        <span>11°C<br />Felhős</span>
      </button>
      <div className="flex">
        {APPS.map(([name, art, state]) => (
          <button key={name} aria-label={name} className="flex w-8 justify-center">
            <span className={`flex h-8 w-7 flex-col items-center justify-center rounded-[3px] pt-1 ${state === "active" ? "bg-[#37373b]" : ""}`}>
              <svg viewBox="0 0 20 20" width="18" height="18" aria-hidden="true" className="mb-[3px] shrink-0">{art}</svg>
              <span className={`h-[2px] shrink-0 rounded-full ${state === "active" ? "w-3 bg-[#e8735e]" : state === "dot" ? "w-1 bg-[#9a9ca0]" : "w-1"}`} />
            </span>
          </button>
        ))}
      </div>
      <div className="flex items-center justify-end pr-[14px] leading-[12px]">
        <ChevronUp size={12} className="mr-[10px]" />
        <button className="mr-3 text-center">ENG<br />US</button>
        <Wifi size={12} className="mr-1" />
        <Volume2 size={12} className="mr-[6px]" />
        <svg viewBox="0 0 14 12" width="13" height="12" className="mr-[10px]"><path d="M2 4h9v6H2zM12 6h1v2h-1z" fill="#f2f3f4" stroke="#f2f3f4" /><path d="M1 1h4v4H1z" fill="#f2f3f4" stroke="#242527" /></svg>
        <p className="mr-2 text-right">13:43<br />2022. 03. 15.</p>
        <span className="flex size-3 items-center justify-center rounded-full bg-[#ee6a52] text-[8px] text-[#222]">4</span>
      </div>
    </div>
  );
}

export default function App() {
  return (
    <div className="flex min-h-screen flex-col bg-[#222933] font-['Roboto','Noto_Sans',sans-serif]">
      <TitleBar />
      <MenuBar />
      <FileTabs />
      <Toolbars />
      <Main />
      <StatusBar />
      <Taskbar />
    </div>
  );
}
